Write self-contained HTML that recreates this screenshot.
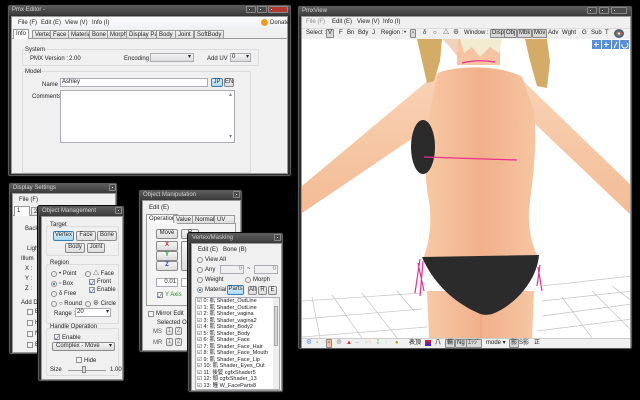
<!DOCTYPE html>
<html><head><meta charset="utf-8">
<style>
*{margin:0;padding:0;box-sizing:border-box}
body{width:640px;height:400px;background:#000;position:relative;overflow:hidden;font-family:"Liberation Sans","Noto Sans CJK JP",sans-serif;font-size:6px;color:#222}
.a{position:absolute}
.t{position:absolute;white-space:nowrap;font-size:6px;line-height:7px}
.win{position:absolute;background-color:#2c2c2c;background-image:linear-gradient(180deg,#606060 0px,#3a3a3a 10px,#2c2c2c 11px);border:1px solid #0a0a0a;border-radius:3px;box-shadow:inset 0 0 0 1px #5a5a5a}
.tt{position:absolute;left:4px;top:1px;color:#d0d0d0;font-size:6px;line-height:8px;white-space:nowrap}
.cl{position:absolute;background:#f0f0f0;border:1px solid #999}
.xb{position:absolute;top:1px;width:7px;height:7px;background:#4a4a4a;border:1px solid #888;border-radius:1px}
.xb:after{content:"";position:absolute;left:2px;top:2px;width:1px;height:1px;background:#eee}
.btn{position:absolute;border:1px solid #8a8a8a;border-radius:2px;background:linear-gradient(#f6f6f6,#dcdcdc);text-align:center;font-size:6px;line-height:7px}
.bb{border-color:#3c7fb1;background:linear-gradient(#e5f4fc,#a7d9f5)}
.box{position:absolute;background:#fff;border:1px solid #abadb3}
.grp{position:absolute;border:1px solid #dcdcdc;border-radius:2px}
.cb{position:absolute;width:6px;height:6px;border:1px solid #8e8f8f;background:#f4f4f4}
.cb.on:after{content:"✓";position:absolute;left:0;top:-2px;font-size:6px;color:#2a4aa0}
.rd{position:absolute;width:6px;height:6px;border:1px solid #8e8f8f;border-radius:50%;background:#eee}
.rd.on:after{content:"";position:absolute;left:1px;top:1px;width:2px;height:2px;border-radius:50%;background:#1a5fb0}
.tab{position:absolute;border:1px solid #9a9a9a;border-bottom:none;background:linear-gradient(#f2f2f2,#dedede);font-size:6px;line-height:8px;padding:0 2px;white-space:nowrap}
.tab.on{background:#fff}
.tb{position:absolute;border:1px solid #8a8a8a;background:#d8d8d8;font-size:6px;line-height:7px;padding:0 1px;white-space:nowrap;border-radius:1px}
</style></head><body>

<!-- PMX EDITOR -->
<div class="win" style="left:7px;top:4px;width:285px;height:173px">
 <div class="tt">Pmx Editor -</div>
 <div class="xb" style="left:238px;width:10px"></div><div class="xb" style="left:249px;width:10px"></div><div class="xb" style="left:260px;width:20px;background:#b03a30"></div>
 <div class="cl" style="left:3px;top:11px;width:277px;height:158px">
  <div class="a" style="left:0;top:0;width:275px;height:12px;background:linear-gradient(#fdfdfd,#eef0f3)"></div>
  <div class="t" style="left:6px;top:3px">File (F)</div><div class="t" style="left:29px;top:3px">Edit (E)</div><div class="t" style="left:53px;top:3px">View (V)</div><div class="t" style="left:80px;top:3px">Info (I)</div>
  <div class="a" style="left:249px;top:2px;width:7px;height:7px;border-radius:50%;background:#f39b1a"></div><div class="t" style="left:258px;top:3px">Donate</div>
  <div class="a" style="left:0;top:21px;width:275px;height:1px;background:#9a9a9a"></div>
  <div class="tab on" style="left:1px;top:12px;height:10px">Info</div>
  <div class="tab" style="left:20px;top:13px;height:8px">Vertex</div>
  <div class="tab" style="left:38px;top:13px;height:8px">Face</div>
  <div class="tab" style="left:56px;top:13px;height:8px">Material</div>
  <div class="tab" style="left:77px;top:13px;height:8px">Bone</div>
  <div class="tab" style="left:95px;top:13px;height:8px">Morph</div>
  <div class="tab" style="left:114px;top:13px;height:8px">Display Pane</div>
  <div class="tab" style="left:144px;top:13px;height:8px">Body</div>
  <div class="tab" style="left:163px;top:13px;height:8px">Joint</div>
  <div class="tab" style="left:182px;top:13px;height:8px">SoftBody</div>
  <div class="grp" style="left:10px;top:32px;width:237px;height:17px"></div>
  <div class="t" style="left:13px;top:30px;background:#f0f0f0">System</div>
  <div class="t" style="left:18px;top:39px">PMX Version :</div><div class="t" style="left:57px;top:39px">2.00</div>
  <div class="t" style="left:112px;top:39px">Encoding :</div>
  <div class="box" style="left:138px;top:36px;width:44px;height:9px;background:linear-gradient(#f4f4f4,#dcdcdc)"><span class="t" style="right:2px;top:0">▾</span></div>
  <div class="t" style="left:195px;top:39px">Add UV :</div>
  <div class="box" style="left:218px;top:36px;width:21px;height:9px;background:linear-gradient(#f4f4f4,#dcdcdc)"><span class="t" style="left:1px;top:0">0</span><span class="t" style="right:1px;top:0">▾</span></div>
  <div class="grp" style="left:10px;top:54px;width:229px;height:102px"></div>
  <div class="t" style="left:13px;top:52px;background:#f0f0f0">Model</div>
  <div class="t" style="left:30px;top:65px">Name :</div>
  <div class="box" style="left:48px;top:61px;width:148px;height:9px"><span class="t" style="left:1px;top:0">Ashley</span></div>
  <div class="btn bb" style="left:199px;top:61px;width:12px;height:9px">JP</div>
  <div class="btn" style="left:212px;top:61px;width:10px;height:9px">EN</div>
  <div class="t" style="left:20px;top:77px">Comments :</div>
  <div class="box" style="left:48px;top:73px;width:175px;height:53px"><span class="t" style="right:2px;top:1px;color:#888">▴</span><span class="t" style="right:2px;bottom:1px;color:#888">▾</span></div>
 </div>
</div>

<!-- DISPLAY SETTINGS -->
<div class="win" style="left:8px;top:182px;width:110px;height:173px">
 <div class="tt">Display Settings</div><div class="xb" style="left:100px"></div>
 <div class="cl" style="left:3px;top:10px;width:104px;height:160px">
  <div class="t" style="left:6px;top:3px">File (F)</div>
  <div class="a" style="left:0;top:21px;width:102px;height:1px;background:#9a9a9a"></div>
  <div class="tab on" style="left:1px;top:12px;height:10px;width:16px">1</div>
  <div class="tab" style="left:18px;top:13px;height:8px">2</div>
  <div class="t" style="left:12px;top:32px">Back</div>
  <div class="t" style="left:14px;top:52px">Light</div>
  <div class="t" style="left:8px;top:62px">Illum</div>
  <div class="t" style="left:12px;top:72px">X :</div><div class="t" style="left:12px;top:82px">Y :</div><div class="t" style="left:12px;top:92px">Z :</div>
  <div class="t" style="left:8px;top:106px">Add Disp</div>
  <div class="cb" style="left:14px;top:115px"></div><div class="t" style="left:22px;top:115px">Bo</div>
  <div class="cb" style="left:14px;top:126px"></div><div class="t" style="left:22px;top:126px">He</div>
  <div class="cb" style="left:14px;top:137px"></div><div class="t" style="left:22px;top:137px">No</div>
  <div class="cb" style="left:14px;top:148px"></div><div class="t" style="left:22px;top:148px">Bd</div>
 </div>
</div>

<!-- OBJECT MANAGEMENT -->
<div class="win" style="left:37px;top:205px;width:88px;height:177px">
 <div class="tt">Object Management</div><div class="xb" style="left:77px"></div>
 <div class="cl" style="left:3px;top:10px;width:82px;height:164px">
  <div class="grp" style="left:4px;top:9px;width:73px;height:30px"></div>
  <div class="t" style="left:8px;top:5px">Target</div>
  <div class="btn bb" style="left:11px;top:14px;width:21px;height:10px">Vertex</div>
  <div class="btn" style="left:34px;top:14px;width:20px;height:10px">Face</div>
  <div class="btn" style="left:55px;top:14px;width:20px;height:10px">Bone</div>
  <div class="btn" style="left:23px;top:26px;width:20px;height:10px">Body</div>
  <div class="btn" style="left:45px;top:26px;width:18px;height:10px">Joint</div>
  <div class="grp" style="left:4px;top:47px;width:73px;height:60px"></div>
  <div class="t" style="left:8px;top:43px">Region</div>
  <div class="rd" style="left:9px;top:54px"></div><div class="t" style="left:17px;top:54px">• Point</div>
  <div class="rd" style="left:43px;top:54px"></div><div class="t" style="left:51px;top:54px">△ Face</div>
  <div class="rd on" style="left:9px;top:64px"></div><div class="t" style="left:17px;top:64px">▫ Box</div>
  <div class="cb on" style="left:47px;top:62px"></div><div class="t" style="left:55px;top:62px">Front</div>
  <div class="cb on" style="left:47px;top:70px"></div><div class="t" style="left:55px;top:70px">Enable</div>
  <div class="rd" style="left:9px;top:74px"></div><div class="t" style="left:17px;top:74px">δ Free</div>
  <div class="rd" style="left:9px;top:84px"></div><div class="t" style="left:17px;top:84px">○ Round</div>
  <div class="rd" style="left:43px;top:84px"></div><div class="t" style="left:51px;top:84px">⊕ Circle</div>
  <div class="t" style="left:12px;top:94px">Range :</div>
  <div class="box" style="left:33px;top:91px;width:36px;height:9px"><span class="t" style="left:1px;top:0">20</span><span class="t" style="right:1px;top:0">▾</span></div>
  <div class="grp" style="left:4px;top:111px;width:73px;height:48px"></div>
  <div class="t" style="left:8px;top:107px">Handle Operation</div>
  <div class="cb on" style="left:12px;top:117px"></div><div class="t" style="left:20px;top:118px">Enable</div>
  <div class="btn" style="left:10px;top:125px;width:63px;height:9px;text-align:left;padding-left:3px">Complex - Move<span style="position:absolute;right:2px">▾</span></div>
  <div class="cb" style="left:34px;top:140px"></div><div class="t" style="left:42px;top:141px">Hide</div>
  <div class="t" style="left:8px;top:150px">Size</div>
  <div class="a" style="left:26px;top:153px;width:38px;height:1px;background:#999"></div>
  <div class="a" style="left:40px;top:149px;width:4px;height:7px;background:#ddd;border:1px solid #888"></div>
  <div class="t" style="left:68px;top:150px">1.00</div>
 </div>
</div>

<!-- OBJECT MANIPULATION -->
<div class="win" style="left:138px;top:189px;width:105px;height:164px">
 <div class="tt">Object Manipulation</div><div class="xb" style="left:94px"></div>
 <div class="cl" style="left:3px;top:10px;width:99px;height:151px">
  <div class="t" style="left:6px;top:4px">Edit (E)</div>
  <div class="a" style="left:3px;top:22px;width:90px;height:1px;background:#9a9a9a"></div>
  <div class="tab on" style="left:3px;top:13px;height:10px">Operation</div>
  <div class="tab" style="left:30px;top:14px;height:8px">Value</div>
  <div class="tab" style="left:49px;top:14px;height:8px">Normal</div>
  <div class="tab" style="left:71px;top:14px;height:8px;width:21px">UV</div>
  <div class="a" style="left:3px;top:23px;width:90px;height:82px;border:1px solid #9a9a9a;border-top:none;background:#f4f4f4"></div>
  <div class="btn" style="left:13px;top:28px;width:22px;height:10px">Move</div>
  <div class="btn" style="left:38px;top:28px;width:18px;height:10px">R</div>
  <div class="btn" style="left:13px;top:40px;width:22px;height:10px;color:#e02020;font-weight:bold">X</div>
  <div class="btn" style="left:13px;top:50px;width:22px;height:10px;color:#20a020;font-weight:bold">Y</div>
  <div class="btn" style="left:13px;top:60px;width:22px;height:10px;color:#2030e0;font-weight:bold">Z</div>
  <div class="btn" style="left:38px;top:40px;width:8px;height:30px"></div>
  <div class="box" style="left:13px;top:77px;width:22px;height:9px"><span class="t" style="right:1px;top:0">0.01</span></div>
  <div class="box" style="left:38px;top:77px;width:10px;height:9px"></div>
  <div class="cb on" style="left:14px;top:91px"></div><div class="t" style="left:22px;top:91px;color:#2a8a2a">Y Axis</div>
  <div class="cb" style="left:5px;top:110px"></div><div class="t" style="left:13px;top:110px">Mirror Edit</div>
  <div class="t" style="left:14px;top:119px">Selected Obj</div>
  <div class="t" style="left:10px;top:128px;color:#555">MS</div><div class="btn" style="left:23px;top:126px;width:7px;height:8px;color:#777">1</div><div class="btn" style="left:32px;top:126px;width:7px;height:8px;color:#777">2</div>
  <div class="t" style="left:10px;top:139px;color:#555">MR</div><div class="btn" style="left:23px;top:137px;width:7px;height:8px;color:#777">1</div><div class="btn" style="left:32px;top:137px;width:7px;height:8px;color:#777">2</div>
 </div>
</div>

<!-- VERTEX/MASKING -->
<div class="win" style="left:187px;top:232px;width:97px;height:161px">
 <div class="tt">Vertex/Masking</div><div class="xb" style="left:86px"></div>
 <div class="cl" style="left:3px;top:10px;width:91px;height:148px">
  <div class="t" style="left:6px;top:3px">Edit (E)</div><div class="t" style="left:31px;top:3px">Bone (B)</div>
  <div class="rd" style="left:5px;top:13px"></div><div class="t" style="left:13px;top:13px">View All</div>
  <div class="rd" style="left:5px;top:23px"></div><div class="t" style="left:13px;top:23px">Any</div>
  <div class="box" style="left:28px;top:21px;width:24px;height:9px;background:#f0f0f0"><span class="t" style="right:1px;top:0;color:#888">0</span></div>
  <div class="t" style="left:55px;top:22px">~</div>
  <div class="box" style="left:62px;top:21px;width:24px;height:9px;background:#f0f0f0"><span class="t" style="right:1px;top:0;color:#888">0</span></div>
  <div class="rd" style="left:5px;top:33px"></div><div class="t" style="left:13px;top:33px">Weight</div>
  <div class="rd" style="left:53px;top:33px"></div><div class="t" style="left:61px;top:33px">Morph</div>
  <div class="rd on" style="left:5px;top:43px"></div><div class="t" style="left:13px;top:43px">Material</div>
  <div class="btn bb" style="left:35px;top:41px;width:17px;height:10px">Parts</div>
  <div class="btn" style="left:56px;top:42px;width:9px;height:9px">All</div>
  <div class="btn" style="left:66px;top:42px;width:9px;height:9px">R</div>
  <div class="btn" style="left:76px;top:42px;width:9px;height:9px">E</div>
  <div class="box" style="left:3px;top:53px;width:85px;height:93px;overflow:hidden">
   <div class="a" style="right:0;top:0;width:6px;height:91px;background:#eee"></div>
   <div class="a" style="right:1px;top:8px;width:4px;height:40px;background:#d4d4d4;border:1px solid #aaa"></div>
   <div style="position:absolute;left:1px;top:0;line-height:6.5px;font-size:5.5px;white-space:nowrap">
    <div>☑ 0: 肌 Shader_OutLine</div><div>☑ 1: 肌 Shader_OutLine</div><div>☑ 2: 肌 Shader_vagina</div><div>☑ 3: 肌 Shader_vagina2</div><div>☑ 4: 肌 Shader_Body2</div><div>☑ 5: 肌 Shader_Body</div><div>☑ 6: 肌 Shader_Face</div><div>☑ 7: 肌 Shader_Face_Hair</div><div>☑ 8: 肌 Shader_Face_Mouth</div><div>☑ 9: 肌 Shader_Face_Lip</div><div>☑ 10: 肌 Shader_Eyes_Out</div><div>☑ 11: 後髪 cgfxShader5</div><div>☑ 12: 頭 cgfxShader_13</div><div>☑ 13: 瞳 W_FaceParts8</div>
   </div>
  </div>
 </div>
</div>

<!-- PMX VIEW -->
<div class="win" style="left:297px;top:5px;width:336px;height:345px">
 <div class="tt">PmxView</div>
 <div class="xb" style="left:289px;width:10px"></div><div class="xb" style="left:301px;width:10px"></div><div class="xb" style="left:313px;width:16px"></div>
 <div class="cl" style="left:3px;top:10px;width:330px;height:332px;background:#fff">
  <div class="a" style="left:0;top:0;width:328px;height:22px;background:#f0f0f0"></div>
  <div class="t" style="left:4px;top:2px;color:#888">File (F)</div><div class="t" style="left:30px;top:2px">Edit (E)</div><div class="t" style="left:55px;top:2px">View (V)</div><div class="t" style="left:81px;top:2px">Info (I)</div>
  <div class="a" style="left:0;top:11px;width:328px;height:11px;border-top:1px solid #ddd"></div>
  <div class="t" style="left:4px;top:13px">Select :</div>
  <div class="tb" style="left:24px;top:12px">V</div>
  <div class="t" style="left:37px;top:13px">F</div><div class="t" style="left:45px;top:13px">Bn</div><div class="t" style="left:56px;top:13px">Bdy</div><div class="t" style="left:70px;top:13px">J</div>
  <div class="t" style="left:79px;top:13px">Region :</div><div class="t" style="left:102px;top:13px">•</div>
  <div class="tb" style="left:108px;top:12px">▫</div>
  <div class="t" style="left:121px;top:13px">δ</div><div class="t" style="left:131px;top:13px">○</div><div class="t" style="left:141px;top:13px">△</div><div class="t" style="left:151px;top:13px">⊕</div>
  <div class="t" style="left:162px;top:13px">Window :</div>
  <div class="tb" style="left:188px;top:12px">Disp</div><div class="tb" style="left:202px;top:12px">Obj</div><div class="tb" style="left:215px;top:12px">Mbk</div><div class="tb" style="left:230px;top:12px">Mov</div>
  <div class="t" style="left:246px;top:13px">Adv</div><div class="t" style="left:260px;top:13px">Wght</div><div class="t" style="left:280px;top:13px">G</div><div class="t" style="left:289px;top:13px">Sub</div><div class="t" style="left:303px;top:13px">T</div>
  <div class="a" style="left:312px;top:12px;width:10px;height:9px;border-radius:50%;background:radial-gradient(#fff 15%,#e33 30%,#3a3 50%,#33e 70%);border:1px solid #667"></div>
  <!-- viewport -->
  <svg class="a" style="left:0;top:22px" width="328" height="299" viewBox="300 38 328 299">
   <defs>
    <linearGradient id="sk" x1="0" y1="0" x2="1" y2="0"><stop offset="0" stop-color="#f7c9a6"/><stop offset=".5" stop-color="#f1b08a"/><stop offset="1" stop-color="#f6c6a2"/></linearGradient>
    <linearGradient id="ar" x1="0" y1="0" x2="0" y2="1"><stop offset="0" stop-color="#f9d3b5"/><stop offset="1" stop-color="#f3bb95"/></linearGradient>
   </defs>
   <g stroke="#c4c4c4" stroke-width="0.7" fill="none">
    <path d="M300 300 L420 292 M300 318 L420 308 M300 336 L425 326 M330 294 L360 337 M360 292 L395 337 M395 290 L412 310 M310 296 L318 337"/>
    <path d="M540 300 L630 290 M540 315 L630 303 M535 330 L630 318 M560 296 L590 337 M590 290 L630 330 M610 285 L630 300 M540 285 L630 275"/>
   </g>
   <path d="M300 185 L435 72 L448 112 L300 212 Z" fill="url(#ar)"/>
   <path d="M515 74 L633 188 L633 218 L530 120 Z" fill="url(#ar)"/>
   <path d="M455 38 L498 38 L498 64 L455 64 Z" fill="#f6c4a2"/>
   <path d="M436 72 C455 64 500 64 520 76 L532 110 C535 140 532 170 528 200 C525 222 528 240 537 258 L421 258 C428 240 430 220 427 200 C421 170 422 130 436 72 Z" fill="url(#sk)"/>
   <path d="M425 290 L532 290 L530 337 L427 337 Z" fill="url(#sk)"/>
   <line x1="479" y1="310" x2="479" y2="337" stroke="#e9a784" stroke-width="1"/>
   <path d="M415 38 L440 38 L438 60 L432 80 L425 82 L420 60 Z" fill="#d4ac68"/>
   <path d="M523 38 L545 38 L548 60 L545 87 L535 85 L528 60 Z" fill="#d4ac68"/>
   <path d="M458 38 L500 38 L497 52 L488 46 L478 56 L470 46 L462 52 Z" fill="#f3ecd0"/>
   <path d="M440 38 L456 38 L455 55 L447 45 Z" fill="#f1d2bd"/>
   <path d="M460 62 Q476 58 493 61" stroke="#e8318f" stroke-width="1.2" fill="none"/>
   <ellipse cx="421" cy="146" rx="12" ry="27" fill="#2a2a2a"/>
   <path d="M422 156 L515 159" stroke="#e8318f" stroke-width="1.3"/>
   <path d="M420 256 L537 254 C535 280 512 305 490 313 C482 315 478 313 474 311 C450 300 430 280 420 256 Z" fill="#2b2b2b"/>
   <path d="M418 258 L413 292 M421 260 L418 295 M416 262 L422 290" stroke="#e8318f" stroke-width="1.2"/>
   <path d="M536 266 L540 290 M538 264 L535 285" stroke="#e8318f" stroke-width="1.2"/>
   <g fill="#5a8fd8"><rect x="590" y="39" width="9" height="9"/><rect x="600" y="39" width="9" height="9"/><rect x="610" y="39" width="7" height="9"/><rect x="618" y="39" width="9" height="9"/></g>
   <g stroke="#fff" stroke-width="1" fill="none"><path d="M594 41 V46 M592 43.5 H597 M604 41 V46 M602 43.5 H607 M612 47 L615 41 M620 43 A3 3 0 1 0 625 42"/></g>
  </svg>
  <div class="a" style="left:0;top:321px;width:328px;height:10px;background:#f0f0f0;border-top:1px solid #ccc"></div>
  <div class="t" style="left:4px;top:323px;color:#47f">⊕</div><div class="t" style="left:14px;top:323px;color:#7d3">▪</div>
  <div class="tb" style="left:24px;top:322px;background:#f2c39b">▫</div>
  <div class="t" style="left:34px;top:323px;color:#888">⊗</div><div class="t" style="left:44px;top:323px;color:#e22">▲</div>
  <div class="t" style="left:53px;top:323px;color:#aaa">─</div><div class="t" style="left:63px;top:323px;color:#ec8">∽</div><div class="t" style="left:73px;top:323px;color:#3c3">⁑</div><div class="t" style="left:83px;top:323px;color:#8ee">⁝</div><div class="t" style="left:93px;top:323px;color:#9a2">●</div>
  <div class="t" style="left:107px;top:323px">表頂</div>
  <div class="a" style="left:123px;top:323px;width:6px;height:6px;background:linear-gradient(#e22,#22e)"></div>
  <div class="t" style="left:133px;top:323px">八</div>
  <div class="tb" style="left:143px;top:322px">輪</div><div class="tb" style="left:153px;top:322px">Ng</div><div class="tb" style="left:164px;top:322px">ｴｯｼﾞ</div>
  <div class="t" style="left:184px;top:323px">mode ▾</div>
  <div class="tb" style="left:207px;top:322px">影</div><div class="t" style="left:217px;top:323px">S影</div>
  <div class="t" style="left:232px;top:323px">正</div>
 </div>
</div>
</body></html>
